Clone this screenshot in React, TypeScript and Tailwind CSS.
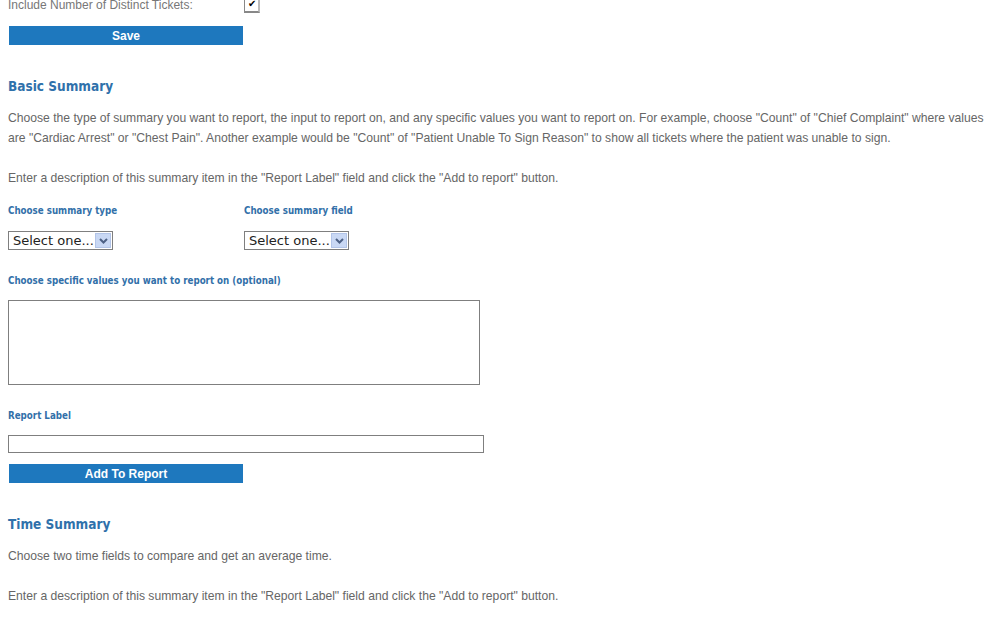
import React from "react";

const Chevron = () => (
  <svg width="9" height="6" viewBox="0 0 9 6">
    <path d="M1 1 L4.5 4.5 L8 1" stroke="#4d6185" strokeWidth="2" fill="none" />
  </svg>
);

const FakeSelect = () => (
  <div className="flex h-[19px] w-[105px] items-center justify-between border border-[#7f7f7f] bg-white pl-[4px] pr-[1px]">
    <span className="font-['DejaVu_Sans',sans-serif] text-[13px] leading-none text-[#222]">
      Select one...
    </span>
    <div className="flex h-[15px] w-[16px] items-center justify-center border border-[#b2c4e8] bg-[#c9d8f4]">
      <Chevron />
    </div>
  </div>
);

const Label = ({ children }: { children: React.ReactNode }) => (
  <div className="font-['DejaVu_Sans_Condensed','DejaVu_Sans',sans-serif] text-[9.7px] font-bold leading-[12px] text-[#3270a9]">
    {children}
  </div>
);

const Heading = ({ children }: { children: React.ReactNode }) => (
  <div className="font-['DejaVu_Sans_Condensed','DejaVu_Sans',sans-serif] text-[13.5px] font-bold leading-[16px] text-[#2f71ab]">
    {children}
  </div>
);

const BlueButton = ({ children }: { children: React.ReactNode }) => (
  <div className="ml-[1px] flex h-[19px] w-[234px] items-center justify-center bg-[#1e78be] font-['Liberation_Sans',sans-serif] text-[12px] font-bold text-white">
    {children}
  </div>
);

export default function App() {
  return (
    <div className="h-[619px] w-[988px] overflow-hidden bg-white font-['Liberation_Sans',Arial,sans-serif]">
      <div className="mt-[-4px] pl-[8px]">
        <div className="flex h-[17px] items-center">
          <span className="mt-[1px] w-[236px] text-[12px] leading-[17px] text-[#777]">Include Number of Distinct Tickets:</span>
          <div className="flex h-[16px] w-[16px] items-center justify-center border-b-2 border-l border-r-2 border-t border-b-[#888] border-l-[#888] border-r-[#bbb] border-t-[#888] bg-white text-[10px] leading-none text-black">
            ✔
          </div>
        </div>
        <div className="mt-[13px]">
          <BlueButton>Save</BlueButton>
        </div>
        <div className="mt-[33px]">
          <Heading>Basic Summary</Heading>
        </div>
        <p className="mt-[14px] text-[12.15px] leading-[20px] text-[#666]">
          Choose the type of summary you want to report, the input to report on, and any specific values you want to report on. For example, choose "Count" of "Chief Complaint" where values are "Cardiac Arrest" or "Chest Pain". Another example would be "Count" of "Patient Unable To Sign Reason" to show all tickets where the patient was unable to sign.
        </p>
        <p className="mt-[20px] text-[12.15px] leading-[20px] text-[#666]">
          Enter a description of this summary item in the "Report Label" field and click the "Add to report" button.
        </p>
        <div className="mt-[17px] flex">
          <div className="w-[236px]">
            <Label>Choose summary type</Label>
            <div className="mt-[14px]">
              <FakeSelect />
            </div>
          </div>
          <div>
            <Label>Choose summary field</Label>
            <div className="mt-[14px]">
              <FakeSelect />
            </div>
          </div>
        </div>
        <div className="mt-[25px]">
          <Label>Choose specific values you want to report on (optional)</Label>
        </div>
        <div className="mt-[13px] h-[85px] w-[472px] border border-[#7f7f7f] bg-white" />
        <div className="mt-[25px]">
          <Label>Report Label</Label>
        </div>
        <div className="mt-[13px] h-[18px] w-[476px] border border-[#7f7f7f] bg-white" />
        <div className="mt-[11px]">
          <BlueButton>Add To Report</BlueButton>
        </div>
        <div className="mt-[33px]">
          <Heading>Time Summary</Heading>
        </div>
        <p className="mt-[14px] text-[12.15px] leading-[20px] text-[#666]">
          Choose two time fields to compare and get an average time.
        </p>
        <p className="mt-[20px] text-[12.15px] leading-[20px] text-[#666]">
          Enter a description of this summary item in the "Report Label" field and click the "Add to report" button.
        </p>
      </div>
    </div>
  );
}
